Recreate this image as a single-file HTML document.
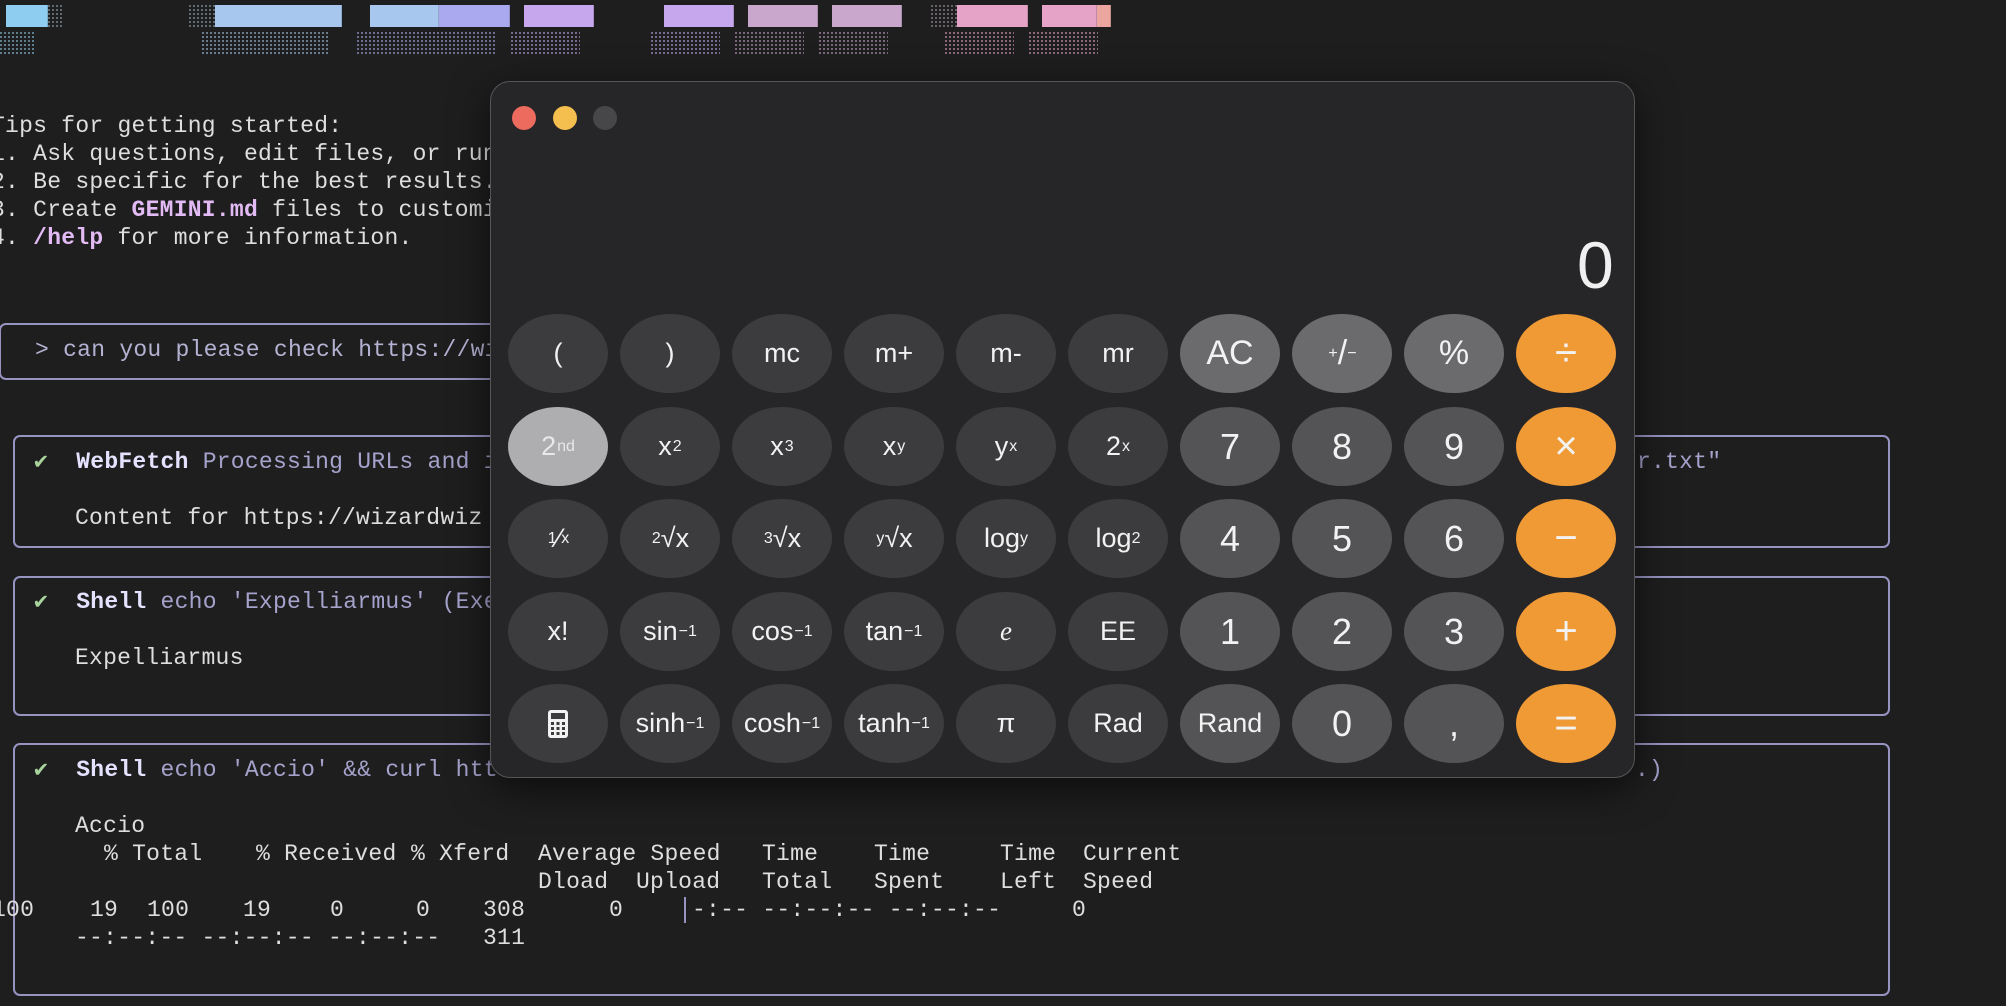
<!DOCTYPE html>
<html><head><meta charset="utf-8"><style>
*{margin:0;padding:0;box-sizing:border-box}
body{width:2006px;height:1006px;background:#1e1e1e;overflow:hidden;position:relative;font-family:"Liberation Mono",monospace;font-size:23px;color:#dedede;letter-spacing:0.25px}
.a{position:absolute;white-space:pre;line-height:28px}
.box{position:absolute;border:2px solid #9794c2;border-radius:7px}
.b{font-weight:bold;color:#e4e2ff}
.d{color:#a5a2cc}
.ck{color:#a8d49c}
.blk{position:absolute;top:5px;height:22px;border-right:1px solid rgba(0,0,0,.15)}
.dot{position:absolute;top:32px;height:22px;opacity:.55;background:repeating-linear-gradient(90deg,var(--c) 0 2px,transparent 2px 4px),#1e1e1e;-webkit-mask:repeating-linear-gradient(0deg,#000 0 2px,transparent 2px 4px);mask:repeating-linear-gradient(0deg,#000 0 2px,transparent 2px 4px)}
.win{position:absolute;left:490px;top:81px;width:1145px;height:697px;background:#262628;border:1.5px solid #555557;border-radius:20px;box-shadow:0 10px 40px rgba(0,0,0,.6)}
.tl{position:absolute;top:106px;width:24px;height:24px;border-radius:50%}
.k{position:absolute;width:100px;height:79px;border-radius:50px/40px;background:#3c3c3e;color:#f2f2f2;font-family:"Liberation Sans",sans-serif;font-size:27px;letter-spacing:0;display:flex;align-items:center;justify-content:center}
.k sup{font-size:16px;vertical-align:10px;margin-left:1px}
.k sub{font-size:16px;vertical-align:-6px}
.n{background:#545456;font-size:36px}
.l{background:#6b6b6d;font-size:34px}
.o{background:#f09a36;font-size:40px}
</style></head><body>
<div class="blk" style="left:6px;width:42px;background:#8ecdf0"></div>
<div class="blk" style="left:215px;width:127px;background:#a8c7ee"></div>
<div class="blk" style="left:370px;width:69px;background:#a8c7ee"></div>
<div class="blk" style="left:439px;width:71px;background:#aaa9f0"></div>
<div class="blk" style="left:524px;width:70px;background:#c6a7ee"></div>
<div class="blk" style="left:664px;width:70px;background:#c6a7ee"></div>
<div class="blk" style="left:748px;width:70px;background:#c9a6cb"></div>
<div class="blk" style="left:832px;width:70px;background:#c9a6cb"></div>
<div class="blk" style="left:957px;width:71px;background:#e6a3c8"></div>
<div class="blk" style="left:1042px;width:55px;background:#e6a3c8"></div>
<div class="blk" style="left:1097px;width:14px;background:#eba79f"></div>
<div class="dot" style="top:5px;left:48px;width:14px;--c:#9ab"></div>
<div class="dot" style="top:5px;left:189px;width:26px;--c:#9ab"></div>
<div class="dot" style="top:5px;left:931px;width:26px;--c:#a9a"></div>
<div class="dot" style="left:0;width:34px;--c:#8ecdf0"></div>
<div class="dot" style="left:202px;width:126px;--c:#a8c7ee"></div>
<div class="dot" style="left:357px;width:139px;--c:#aab0f0"></div>
<div class="dot" style="left:511px;width:69px;--c:#c6a7ee"></div>
<div class="dot" style="left:651px;width:69px;--c:#c6a7ee"></div>
<div class="dot" style="left:735px;width:69px;--c:#c9a6cb"></div>
<div class="dot" style="left:819px;width:69px;--c:#c9a6cb"></div>
<div class="dot" style="left:945px;width:69px;--c:#e6a3c8"></div>
<div class="dot" style="left:1029px;width:69px;--c:#e6a3c8"></div>

<div class="a" style="left:-9px;top:112px">Tips for getting started:
1. Ask questions, edit files, or run commands.
2. Be specific for the best results.
3. Create <span class="b" style="color:#e2baf4">GEMINI.md</span> files to customize your interactions.
4. <span class="b" style="color:#e2baf4">/help</span> for more information.</div>

<div class="box" style="left:-1px;top:323px;width:620px;height:57px"></div>
<div class="a" style="left:35px;top:336px;color:#b4b2d2">&gt; can you please check https://wizardwiz</div>

<div class="box" style="left:13px;top:435px;width:1877px;height:113px"></div>
<div class="a" style="left:34px;top:448px"><span class="ck">✔</span>  <span class="b">WebFetch</span> <span class="d">Processing URLs and i</span></div>
<div class="a" style="left:75px;top:504px">Content for https://wizardwiz</div>
<div class="a d" style="left:1637px;top:448px">r.txt"</div>

<div class="box" style="left:13px;top:576px;width:1877px;height:140px"></div>
<div class="a" style="left:34px;top:588px"><span class="ck">✔</span>  <span class="b">Shell</span> <span class="d">echo 'Expelliarmus' (Exe</span></div>
<div class="a" style="left:75px;top:644px">Expelliarmus</div>

<div class="box" style="left:13px;top:743px;width:1877px;height:253px"></div>
<div class="a" style="left:34px;top:756px"><span class="ck">✔</span>  <span class="b">Shell</span> <span class="d">echo 'Accio' &amp;&amp; curl htt</span></div>
<div class="a d" style="left:1635px;top:756px">.)</div>
<div class="a" style="left:75px;top:812px">Accio</div>
<div class="a" style="left:104px;top:840px">% Total</div>
<div class="a" style="left:256px;top:840px">% Received</div>
<div class="a" style="left:411px;top:840px">% Xferd</div>
<div class="a" style="left:538px;top:840px">Average Speed</div>
<div class="a" style="left:762px;top:840px">Time</div>
<div class="a" style="left:874px;top:840px">Time</div>
<div class="a" style="left:1000px;top:840px">Time</div>
<div class="a" style="left:1083px;top:840px">Current</div>
<div class="a" style="left:538px;top:868px">Dload</div>
<div class="a" style="left:636px;top:868px">Upload</div>
<div class="a" style="left:762px;top:868px">Total</div>
<div class="a" style="left:874px;top:868px">Spent</div>
<div class="a" style="left:1000px;top:868px">Left</div>
<div class="a" style="left:1083px;top:868px">Speed</div>
<div class="a" style="left:-8px;top:896px">100</div>
<div class="a" style="left:90px;top:896px">19</div>
<div class="a" style="left:147px;top:896px">100</div>
<div class="a" style="left:243px;top:896px">19</div>
<div class="a" style="left:330px;top:896px">0</div>
<div class="a" style="left:416px;top:896px">0</div>
<div class="a" style="left:483px;top:896px">308</div>
<div class="a" style="left:609px;top:896px">0</div>
<div style="position:absolute;left:684px;top:897px;width:2px;height:26px;background:#9794c2"></div>
<div class="a" style="left:692px;top:896px">-:-- --:--:-- --:--:--</div>
<div class="a" style="left:1072px;top:896px">0</div>
<div class="a" style="left:75px;top:924px">--:--:-- --:--:-- --:--:--</div>
<div class="a" style="left:483px;top:924px">311</div>

<div class="win"></div>
<div class="tl" style="left:512px;background:#ec6a5e"></div>
<div class="tl" style="left:553px;background:#f4bf4f"></div>
<div class="tl" style="left:593px;background:#47474a"></div>
<div style="position:absolute;right:392px;top:225px;font-family:'Liberation Sans',sans-serif;font-size:66px;color:#f0f0f0;line-height:80px">0</div>

<div class="k" style="left:508px;top:314px">(</div>
<div class="k" style="left:620px;top:314px">)</div>
<div class="k" style="left:732px;top:314px">mc</div>
<div class="k" style="left:844px;top:314px">m+</div>
<div class="k" style="left:956px;top:314px">m-</div>
<div class="k" style="left:1068px;top:314px">mr</div>
<div class="k l" style="left:1180px;top:314px">AC</div>
<div class="k l" style="left:1292px;top:314px"><sup>+</sup>/<sub>−</sub></div>
<div class="k l" style="left:1404px;top:314px">%</div>
<div class="k o" style="left:1516px;top:314px">÷</div>

<div class="k" style="left:508px;top:407px;background:#aeaeb0;color:#e8e8e8">2<sup>nd</sup></div>
<div class="k" style="left:620px;top:407px">x<sup>2</sup></div>
<div class="k" style="left:732px;top:407px">x<sup>3</sup></div>
<div class="k" style="left:844px;top:407px">x<sup>y</sup></div>
<div class="k" style="left:956px;top:407px">y<sup>x</sup></div>
<div class="k" style="left:1068px;top:407px">2<sup>x</sup></div>
<div class="k n" style="left:1180px;top:407px">7</div>
<div class="k n" style="left:1292px;top:407px">8</div>
<div class="k n" style="left:1404px;top:407px">9</div>
<div class="k o" style="left:1516px;top:407px">×</div>

<div class="k" style="left:508px;top:499px"><sup>1</sup>⁄<sub>x</sub></div>
<div class="k" style="left:620px;top:499px"><sup>2</sup>√x</div>
<div class="k" style="left:732px;top:499px"><sup>3</sup>√x</div>
<div class="k" style="left:844px;top:499px"><sup>y</sup>√x</div>
<div class="k" style="left:956px;top:499px">log<sub>y</sub></div>
<div class="k" style="left:1068px;top:499px">log<sub>2</sub></div>
<div class="k n" style="left:1180px;top:499px">4</div>
<div class="k n" style="left:1292px;top:499px">5</div>
<div class="k n" style="left:1404px;top:499px">6</div>
<div class="k o" style="left:1516px;top:499px">−</div>

<div class="k" style="left:508px;top:592px">x!</div>
<div class="k" style="left:620px;top:592px">sin<sup>−1</sup></div>
<div class="k" style="left:732px;top:592px">cos<sup>−1</sup></div>
<div class="k" style="left:844px;top:592px">tan<sup>−1</sup></div>
<div class="k" style="left:956px;top:592px;font-family:'Liberation Serif',serif;font-style:italic">e</div>
<div class="k" style="left:1068px;top:592px">EE</div>
<div class="k n" style="left:1180px;top:592px">1</div>
<div class="k n" style="left:1292px;top:592px">2</div>
<div class="k n" style="left:1404px;top:592px">3</div>
<div class="k o" style="left:1516px;top:592px">+</div>

<div class="k" style="left:508px;top:684px"><svg width="22" height="30" viewBox="0 0 22 30"><rect x="1" y="1" width="20" height="28" rx="3" fill="#f2f2f2"/><rect x="4" y="4" width="14" height="6" fill="#3c3c3e"/><g fill="#3c3c3e"><rect x="4" y="13" width="3" height="3"/><rect x="9.5" y="13" width="3" height="3"/><rect x="15" y="13" width="3" height="3"/><rect x="4" y="18" width="3" height="3"/><rect x="9.5" y="18" width="3" height="3"/><rect x="15" y="18" width="3" height="3"/><rect x="4" y="23" width="3" height="3"/><rect x="9.5" y="23" width="3" height="3"/><rect x="15" y="23" width="3" height="3"/></g></svg></div>
<div class="k" style="left:620px;top:684px">sinh<sup>−1</sup></div>
<div class="k" style="left:732px;top:684px">cosh<sup>−1</sup></div>
<div class="k" style="left:844px;top:684px">tanh<sup>−1</sup></div>
<div class="k" style="left:956px;top:684px">π</div>
<div class="k" style="left:1068px;top:684px">Rad</div>
<div class="k n" style="left:1180px;top:684px;font-size:27px">Rand</div>
<div class="k n" style="left:1292px;top:684px">0</div>
<div class="k n" style="left:1404px;top:684px">,</div>
<div class="k o" style="left:1516px;top:684px">=</div>
</body></html>
